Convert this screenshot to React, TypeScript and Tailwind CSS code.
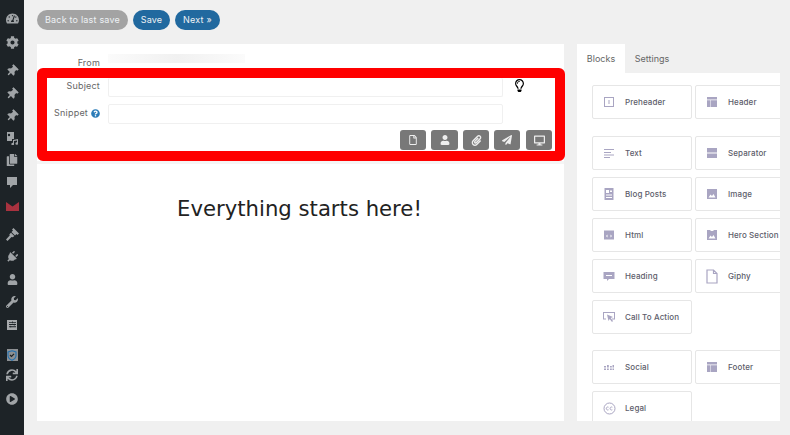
import React from 'react';
import {
  FaTachometerAlt, FaCog, FaThumbtack, FaCopy, FaPlug, FaUser, FaWrench,
  FaSync, FaPlayCircle, FaRegFile, FaPaperclip, FaPaperPlane, FaDesktop, FaRegLightbulb, FaQuestionCircle,
  FaSlidersH,
} from 'react-icons/fa';

const P = '#a9a5c2';

const Box = ({ children }: { children: React.ReactNode }) => (
  <svg width="12" height="12" viewBox="0 0 12 12" fill={P}>{children}</svg>
);

const PreheaderIcon = () => <Box><path fillRule="evenodd" d="M1 1h10v10H1zM2 2v8h8V2z" /><path d="M5.500 4h1v4h-1z" /></Box>;
const HeaderIcon = () => <Box><path d="M1 1h10v2.500H1zM1 4.200h3.500V11H1zM5 4.200h6V11H5z" /></Box>;
const TextIcon = () => <Box><path d="M1 2h10v1H1zM1 5h7v1H1zM1 7.500h10v1H1zM1 10h6v1H1z" /></Box>;
const SeparatorIcon = () => <Box><path d="M1 1h10v4H1zM1 5.600h10v.8H1zM1 7h10v4H1z" /></Box>;
const BlogIcon = () => <Box><path fillRule="evenodd" d="M1.500 0h9v12h-9zM3 2v3h3V2zM7 2.500V4h2V2.500zM3 6.500v1h6v-1zM3 9v1h6V9z" /></Box>;
const ImageIcon = () => <Box><path fillRule="evenodd" d="M1 1h10v10H1zM2.500 9.500h7L7.500 6 6 8 4.500 6.500z" /></Box>;
const HtmlIcon = () => <Box><path fillRule="evenodd" d="M1 1.500h10v9H1zM4.500 5.500 3 7l1.500 1.500zM7.500 5.500v3L9 7z" /></Box>;
const HeroIcon = () => <Box><path fillRule="evenodd" d="M1 1h3l1 1h2l1-1h3v10H1zM2.500 9.500h7L7.500 6 6 8 4.500 6.500z" /></Box>;
const HeadingIcon = () => <Box><path fillRule="evenodd" d="M0.500 2h11v7H6l-2 2V9H.5zM3 5v1h6V5z" /></Box>;
const GiphyIcon = () => (
  <svg width="12" height="15" viewBox="0 0 12 15" fill="none" stroke={P} strokeWidth="1.200"><path d="M1 1h6.500L11 4.500V14H1zM7.500 1v3.500H11" /></svg>
);
const CtaIcon = () => (
  <svg width="12" height="12" viewBox="0 0 12 12" fill={P}>
    <path fillRule="evenodd" d="M0 1h12v7.500H9V7.500h2V2H1v5.500h2v1H0z" />
    <path d="M4 3.500 10 6 7.800 7 10 10l-1 1-2.300-3L5.500 10z" />
  </svg>
);
const SocialIcon = () => <Box><path d="M1 5h2v1.500H1zM4 4h1.800v2.500H4zM7 5h1.800v1.500H7zM9.500 4H11v2.500H9.500zM1 7.500h2V9H1zM4 7.500h1.800V9H4zM7 7.500h1.800V9H7zM9.500 7.500H11V9H9.500z" /></Box>;
const LegalIcon = () => (
  <svg width="13" height="13" viewBox="0 0 13 13" fill="none" stroke={P} strokeWidth="1">
    <circle cx="6.500" cy="6.500" r="5.500" />
    <path d="M5.500 5.200a1.500 1.500 0 1 0 0 2.600M9.300 5.200a1.500 1.500 0 1 0 0 2.600" />
  </svg>
);

// wp menu glyphs the icon packages don't have in this shape
const MediaGlyph = () => (
  <svg width="13" height="13" viewBox="0 0 13 13" fill="currentColor">
    <path fillRule="evenodd" d="M1 0h7v7H6v2H1zM3 1.800a1.200 1.200 0 1 0 0 2.400 1.200 1.200 0 0 0 0-2.400z" />
    <path d="M7 8l5-1v4.500a1.300 1.300 0 1 1-1-1.200V8.500l-3 .6v3a1.300 1.300 0 1 1-1-1.200z" />
  </svg>
);
const CommentGlyph = () => (
  <svg width="12" height="13" viewBox="0 0 12 13" fill="currentColor">
    <path d="M1 1h10v8H7l-3 3V9H1z" />
  </svg>
);
const MailGlyph = () => (
  <svg width="13" height="9" viewBox="0 0 13 9" fill="#a8323f">
    <path d="M0 0l6.500 4.500L13 0v9H0z" />
  </svg>
);
const BrushGlyph = () => (
  <svg width="13" height="13" viewBox="0 0 13 13" fill="currentColor">
    <path d="M7.500 0 13 5.500 11.500 7 10.500 6 9 7.500 5.500 4 7 2.500 6 1.500zM5 4.700l3.300 3.300-1.500 1.300-1.300-.3L1.500 13 0 11.500l3.700-4-.3-1.300z" />
  </svg>
);
const ShieldGlyph = () => (
  <div className="flex h-[12px] w-[11px] items-center justify-center bg-[#8d9093]">
    <svg width="10" height="11" viewBox="0 0 10 11" fill="none">
      <path d="M5 .8 9 2v3.500c0 2.300-1.700 3.800-4 4.800-2.300-1-4-2.500-4-4.800V2z" stroke="#2271b1" strokeWidth="1.100" />
      <path d="M3 5l1.500 1.500L7 3.800" stroke="#1d2327" strokeWidth="1.200" />
    </svg>
  </div>
);

const sideIcons = [
  { icon: <FaTachometerAlt size={13} />, h: 24, mt: 6 },
  { icon: <FaCog size={13} />, h: 24, mt: 0 },
  { icon: <FaThumbtack size={12} className="rotate-45" />, h: 22, mt: 6 },
  { icon: <FaThumbtack size={12} className="rotate-45" />, h: 22, mt: 1 },
  { icon: <FaThumbtack size={12} className="rotate-45" />, h: 22, mt: 0 },
  { icon: <MediaGlyph />, h: 22, mt: 0 },
  { icon: <FaCopy size={12} />, h: 22, mt: 0 },
  { icon: <CommentGlyph />, h: 22, mt: 0 },
  { icon: <MailGlyph />, h: 22, mt: 2 },
  { icon: <BrushGlyph />, h: 22, mt: 6 },
  { icon: <FaPlug size={12} className="rotate-45" />, h: 22, mt: 1 },
  { icon: <FaUser size={11} />, h: 23, mt: 0 },
  { icon: <FaWrench size={12} />, h: 22, mt: 0 },
  { icon: <div className="flex h-[10px] w-[10px] items-center justify-center bg-[#a7aaad]"><FaSlidersH size={7} className="text-[#1d2327]" /></div>, h: 23, mt: 0 },
  { icon: <ShieldGlyph />, h: 22, mt: 8 },
  { icon: <FaSync size={12} />, h: 18, mt: 0 },
  { icon: <FaPlayCircle size={12} />, h: 30, mt: 0 },
];

const Sidebar = () => (
  <div className="flex w-6 shrink-0 flex-col bg-[#1d2327] text-[#a0a4a7]">
    {sideIcons.map((s, i) => (
      <div key={i} className="flex items-center justify-center" style={{ height: s.h, marginTop: s.mt }}>
        {s.icon}
      </div>
    ))}
  </div>
);

const Block = ({ icon, label }: { icon: React.ReactNode; label: string }) => (
  <div className="flex h-[34px] w-[100px] shrink-0 items-center rounded-[2px] border border-[#e6e6e6] bg-white">
    <div className="flex w-[32px] shrink-0 justify-center">{icon}</div>
    <span className="whitespace-nowrap text-[8px] font-medium tracking-[0.1px] text-[#5d5d6b]">{label}</span>
  </div>
);

const ToolButton = ({ children, className }: { children: React.ReactNode; className: string }) => (
  <button className={`flex h-[20px] items-center justify-center rounded-[3px] bg-[#787878] text-[#eee] ${className}`}>
    {children}
  </button>
);

const rows = [
  { mt: 12, items: [{ icon: <PreheaderIcon />, label: 'Preheader' }, { icon: <HeaderIcon />, label: 'Header' }] },
  { mt: 17, items: [{ icon: <TextIcon />, label: 'Text' }, { icon: <SeparatorIcon />, label: 'Separator' }] },
  { mt: 7, items: [{ icon: <BlogIcon />, label: 'Blog Posts' }, { icon: <ImageIcon />, label: 'Image' }] },
  { mt: 7, items: [{ icon: <HtmlIcon />, label: 'Html' }, { icon: <HeroIcon />, label: 'Hero Section' }] },
  { mt: 7, items: [{ icon: <HeadingIcon />, label: 'Heading' }, { icon: <GiphyIcon />, label: 'Giphy' }] },
  { mt: 7, items: [{ icon: <CtaIcon />, label: 'Call To Action' }] },
  { mt: 16, items: [{ icon: <SocialIcon />, label: 'Social' }, { icon: <HeaderIcon />, label: 'Footer' }] },
  { mt: 7, items: [{ icon: <LegalIcon />, label: 'Legal' }] },
];

export default function App() {
  return (
    <div className="flex h-[435px] w-[790px] overflow-hidden bg-[#f0f0f0] font-['Inter',sans-serif]">
      <Sidebar />
      <div className="min-w-0 flex-1 pl-[13px] pt-[10px]">
        <div className="flex h-[20px] gap-[5px] text-[9px] tracking-[0.2px] text-[#eef2f5]">
          <button className="w-[91px] rounded-full bg-[#a3a3a3]">Back to last save</button>
          <button className="w-[37px] rounded-full bg-[#21699f]">Save</button>
          <button className="w-[45px] rounded-full bg-[#21699f]">Next »</button>
        </div>

        <div className="mt-[14px] flex">
          <div className="h-[377px] w-[527px] shrink-0 bg-white">
            <div className="flex h-[24px] items-center">
              <span className="w-[63px] pt-[13px] text-right text-[9px] tracking-[0.2px] text-[#666]">From</span>
              <div className="ml-[8px] mt-[5px] h-[9px] w-[137px] bg-gradient-to-r from-[#fbfbfb] via-[#f1f1f1] to-[#fbfbfb]" />
            </div>
            <div className="-mr-px h-[93px] rounded-[6px] border-[10px] border-[#ff0000] bg-white">
              <div className="flex">
                <span className="w-[53px] pt-[2px] text-right text-[9px] leading-[12px] tracking-[0.2px] text-[#666]">Subject</span>
                <div className="ml-[8px] h-[19px] w-[395px] rounded-[2px] border border-t-0 border-[#f0f0f0]" />
                <FaRegLightbulb size={13} className="ml-[10px] mt-[1px] text-black" />
              </div>
              <div className="mt-[7px] flex items-start">
                <span className="flex w-[53px] items-center justify-end gap-[3px] whitespace-nowrap text-[9px] leading-[18px] tracking-[0.2px] text-[#666]">
                  Snippet <FaQuestionCircle size={9} className="shrink-0 text-[#2b7cb8]" />
                </span>
                <div className="ml-[8px] h-[20px] w-[395px] rounded-[2px] border border-[#f0f0f0]" />
              </div>
              <div className="mr-[3px] mt-[6px] flex justify-end gap-[5px]">
                <ToolButton className="w-[26px]"><FaRegFile size={10} /></ToolButton>
                <ToolButton className="w-[27px]"><FaUser size={10} /></ToolButton>
                <ToolButton className="w-[26px]"><FaPaperclip size={11} /></ToolButton>
                <ToolButton className="mr-[1px] w-[26px]"><FaPaperPlane size={10} /></ToolButton>
                <ToolButton className="w-[26px]"><FaDesktop size={11} /></ToolButton>
              </div>
            </div>
            <div className="h-[3px] bg-[#f5f5f5]" />
            <p className="pr-[2px] pt-[31px] text-center font-['DejaVu_Sans',sans-serif] text-[21.2px] leading-[28px] text-[#222]">
              Everything starts here!
            </p>
          </div>

          <div className="ml-[13px] flex h-[377px] w-[203px] shrink-0 flex-col">
            <div className="flex h-[29px] shrink-0 text-[9px] text-[#666]">
              <div className="flex w-[48px] items-center justify-center bg-white">Blocks</div>
              <div className="flex w-[54px] items-center justify-center">Settings</div>
            </div>
            <div className="min-h-0 flex-1 overflow-hidden bg-white pl-[15px]">
              {rows.map((row, i) => (
                <div key={i} className="flex gap-[3px]" style={{ marginTop: row.mt }}>
                  {row.items.map((b) => (
                    <Block key={b.label} icon={b.icon} label={b.label} />
                  ))}
                </div>
              ))}
            </div>
          </div>
        </div>
      </div>
    </div>
  );
}
